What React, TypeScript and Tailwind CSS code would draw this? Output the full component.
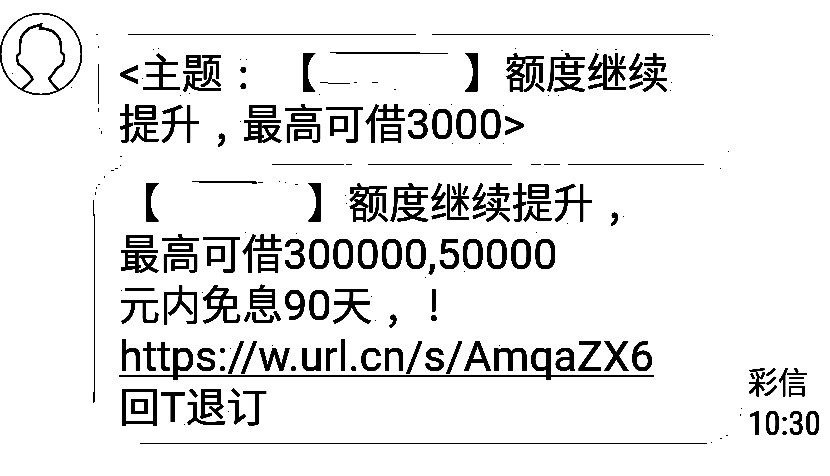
import type { ReactNode } from "react";

type Segment = [number, number, number, number];

const outline: Segment[] = [
  [128, 34, 288, 1],
  [432, 34, 278, 1],
  [98, 64, 1, 40],
  [98, 46, 1, 2],
  [98, 108, 1, 4],
  [96, 34, 2, 1],
  [272, 164, 72, 1],
  [346, 164, 6, 1],
  [368, 164, 144, 1],
  [531, 164, 10, 1],
  [544, 164, 16, 1],
  [568, 164, 136, 1],
  [93, 200, 1, 16],
  [94, 214, 1, 188],
  [93, 392, 1, 11],
  [140, 443, 567, 1],
];

const redaction: Segment[] = [
  [330, 52, 90, 1],
  [336, 53, 112, 1],
  [320, 82, 8, 1],
  [328, 83, 22, 1],
  [354, 82, 3, 1],
  [372, 82, 6, 1],
  [394, 89, 2, 1],
  [192, 181, 64, 1],
  [199, 182, 58, 1],
  [252, 183, 5, 1],
  [258, 182, 5, 1],
  [279, 181, 1, 1],
  [285, 182, 1, 1],
  [295, 184, 3, 1],
];

const specks: Segment[] = [
  [99, 128, 1, 1], [101, 131, 1, 3], [120, 156, 2, 1], [120, 165, 1, 1],
  [115, 168, 3, 1], [111, 170, 3, 1], [104, 176, 1, 2], [98, 184, 2, 1],
  [96, 187, 1, 2], [95, 192, 1, 3], [712, 35, 1, 1], [728, 151, 1, 1],
  [720, 168, 1, 1], [711, 442, 1, 1], [720, 438, 2, 1], [726, 435, 2, 1],
  [740, 414, 1, 2], [741, 408, 1, 1], [12, 73, 1, 1], [71, 87, 1, 1],
  [153, 49, 1, 1], [158, 48, 1, 1], [142, 78, 1, 1], [180, 95, 1, 1],
  [189, 93, 1, 1], [240, 59, 1, 1], [246, 59, 1, 1], [240, 121, 1, 1],
  [319, 94, 1, 1], [515, 48, 1, 1], [429, 104, 1, 1], [451, 104, 1, 1],
  [503, 105, 1, 1], [452, 143, 1, 1], [479, 143, 1, 1], [503, 143, 1, 1],
  [561, 50, 2, 1], [597, 49, 1, 1], [615, 49, 2, 1], [671, 82, 1, 1],
  [670, 90, 1, 1], [548, 95, 1, 1], [558, 95, 1, 1], [623, 216, 1, 1],
  [567, 223, 1, 1], [536, 232, 1, 1], [345, 195, 1, 1], [346, 203, 1, 1],
  [245, 232, 1, 1], [296, 233, 1, 1], [121, 290, 1, 1], [202, 292, 1, 1],
  [371, 296, 1, 1], [375, 320, 1, 1], [391, 326, 1, 1], [464, 271, 1, 1],
  [425, 277, 1, 1], [230, 348, 1, 1], [272, 345, 1, 1], [499, 345, 1, 1],
  [228, 411, 1, 1], [184, 424, 1, 1],
];

function Traces() {
  return (
    <svg
      className="pointer-events-none absolute top-0 left-0"
      width="830"
      height="476"
      shapeRendering="crispEdges"
      aria-hidden="true"
    >
      {[...outline, ...redaction, ...specks].map(([x, y, w, h], i) => (
        <rect key={i} x={x} y={y} width={w} height={h} />
      ))}
    </svg>
  );
}

function Avatar() {
  return (
    <svg className="mt-3 size-[83px] shrink-0" viewBox="0 12 83 83" fill="none" stroke="black" role="img" aria-label="头像">
      <circle cx="41" cy="54" r="40.5" strokeWidth="1.2" />
      <path
        strokeWidth="2"
        d="M22 89.500L28 84L32.500 79.500L31 76L26 70.500L23 67.500L18.500 64L17 59L17 56L20 53L20 44L21 38L24 33L29 28.500L34 26.500L39 25.500L41 24.500L40 28.500L46 29L52 31L57 35L60 40L61 46L61 52L64 55L64 60L62 65L57 68L53 74L49 78.500L51 82L58 89.500"
      />
    </svg>
  );
}

/* Half-width punctuation centred in a full character cell. */
function Mark({ children }: { children: ReactNode }) {
  return (
    <span className="inline-block w-[41px] text-center [font-feature-settings:'halt']">{children}</span>
  );
}

function Latin({ children }: { children: ReactNode }) {
  return <span className="font-[Roboto,sans-serif] text-[43px] leading-none">{children}</span>;
}

function Hidden() {
  return <span className="inline-block w-[147px]" />;
}

export default function App() {
  return (
    <main className="relative flex min-h-screen items-start bg-white text-black brightness-[0.58] contrast-[12]">
      <Avatar />
      <Traces />
      <div className="flex min-w-0 flex-1 items-end">
        <div className="min-w-0 flex-1 pt-[45px] pb-4 pl-9 font-['Noto_Sans_CJK_SC',sans-serif] text-[41px] leading-[51px] whitespace-nowrap">
          <section>
            <p>
              <Latin>&lt;</Latin>主题<Mark>:</Mark>
              <span className="ml-3">【</span>
              <Hidden />】额度继续
            </p>
            <p>
              提升<Mark>,</Mark>最高可借<Latin>3000&gt;</Latin>
            </p>
          </section>
          <section className="mt-7">
            <p>
              【<Hidden />】额度继续提升<Mark>,</Mark>
            </p>
            <p>
              最高可借<Latin>300000,50000</Latin>
            </p>
            <p>
              元内免息<Latin>90</Latin>天<Mark>,</Mark>
              <Mark>!</Mark>
            </p>
            <p>
              <a
                href="https://w.url.cn/s/AmqaZX6"
                className="underline decoration-2 underline-offset-4 [text-decoration-skip-ink:none]"
              >
                <Latin>https://w.url.cn/s/AmqaZX6</Latin>
              </a>
            </p>
            <p>
              回<Latin>T</Latin>退订
            </p>
          </section>
        </div>
        <div className="w-[82px] shrink-0 font-['Noto_Sans_CJK_SC',sans-serif] text-[30px] leading-[44px] whitespace-nowrap">
          <p>彩信</p>
          <p className="font-['Roboto_Condensed','Liberation_Sans_Narrow',Roboto,sans-serif] text-[33px]">10:30</p>
        </div>
      </div>
    </main>
  );
}
